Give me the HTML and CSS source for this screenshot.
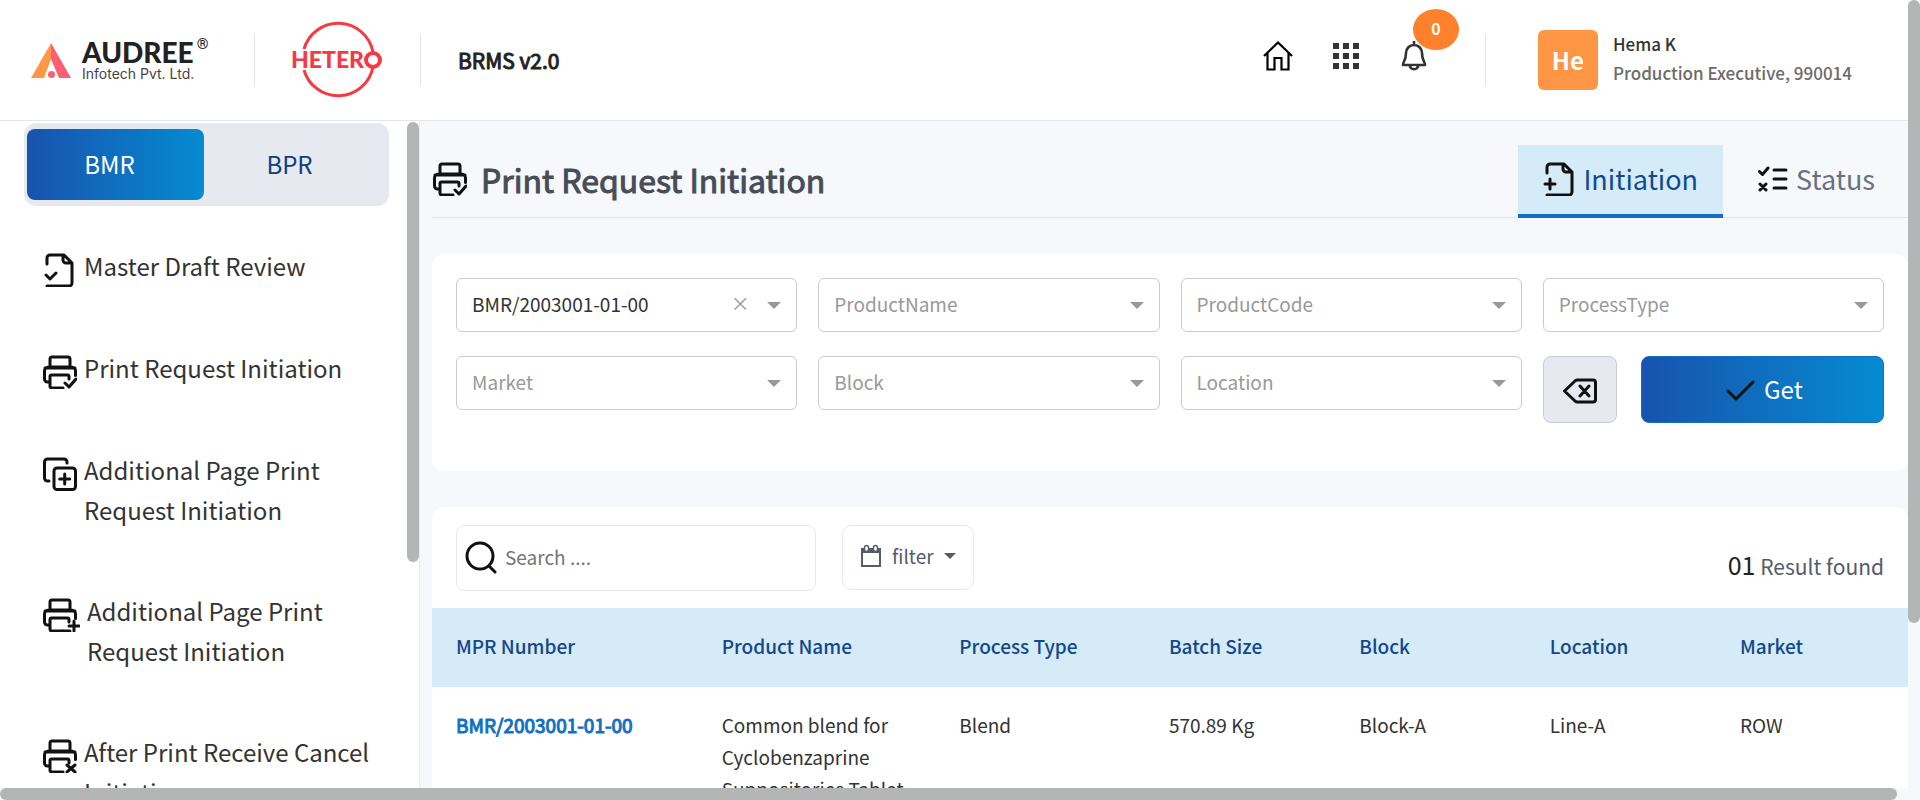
FILE: index.html
```
<!DOCTYPE html>
<html lang="en">
<head>
<meta charset="utf-8">
<title>BRMS v2.0 - Print Request Initiation</title>
<link rel="stylesheet" href="styles.css">
</head>
<body>
<svg class="sprite" aria-hidden="true">
  <symbol id="i-printer" viewBox="0 0 34 34">
    <path d="M7 12V4a2 2 0 0 1 2-2h16a2 2 0 0 1 2 2v8M2 13h30M7 27H4.500a3 3 0 0 1-3-3v-8a4 4 0 0 1 4-4h23a4 4 0 0 1 4 4v4.500M26 24v-2.500a1.500 1.500 0 0 0-1.500-1.500h-16a1.500 1.500 0 0 0-1.500 1.500V31a2 2 0 0 0 2 2h11"/>
  </symbol>
  <symbol id="i-file" viewBox="0 0 34 34">
    <path d="M4 11V5a3 3 0 0 1 3-3h14l8 8v20a3 3 0 0 1-3 3H4M20 2v5a3 3 0 0 0 3 3h6"/>
  </symbol>
</svg>
<div class="frame">
  <div class="page">
    <header class="topbar">
      <div class="audree">
        <svg class="audree-mark" viewBox="0 0 40 35" aria-hidden="true">
          <path fill="#ff9846" d="M20 0 0 35h13l7-19z"/>
          <path fill="#fd5f72" d="M20 0l20 35H28l-8-19z"/>
          <circle cx="20.500" cy="31.500" r="3.500" fill="#fd5f72"/>
        </svg>
        <div class="audree-words">
          <span class="audree-name">AUDREE<span class="reg">®</span></span>
          <span class="audree-sub">Infotech Pvt. Ltd.</span>
        </div>
      </div>
      <span class="rule"></span>
      <svg class="hetero" viewBox="0 0 92 78" role="img" aria-label="Hetero">
        <g fill="none" stroke="#f53a43">
          <path stroke-width="3" d="M13 28a35.500 35.500 0 0 1 69 3M82 46a35.500 35.500 0 0 1-69 3"/>
          <circle cx="82" cy="39" r="7" stroke-width="4"/>
        </g>
        <text class="hetero-text" x="0" y="47">HETER</text>
      </svg>
      <span class="rule"></span>
      <span class="app-name">BRMS v2.0</span>
      <nav class="top-actions" aria-label="Shortcuts">
        <a href="#home" class="top-icon" aria-label="Home">
          <svg viewBox="0 0 30 30"><path d="M1 15 15 1.500 29 15M4.500 12v16.500h7V17h7v11.500h7V12" fill="none" stroke="#000" stroke-width="2.200"/></svg>
        </a>
        <button type="button" class="top-icon" aria-label="Apps">
          <svg viewBox="0 0 30 30"><path fill="#333" d="M2 2h6v6H2zM12 2h6v6h-6zM22 2h6v6h-6zM2 12h6v6H2zM12 12h6v6h-6zM22 12h6v6h-6zM2 22h6v6H2zM12 22h6v6h-6zM22 22h6v6h-6z"/></svg>
        </button>
        <button type="button" class="top-icon bell" aria-label="Notifications">
          <svg viewBox="0 0 30 30"><path d="M15 0v4M15 4c-5 0-8 4-8 8 0 8-3 8-3 12h22c0-4-3-4-3-12 0-4-3-8-8-8z" fill="none" stroke="#333" stroke-width="2.600" stroke-linejoin="round"/><path d="M9.500 24.500a5.500 5 0 0 0 11 0z" fill="#333"/><path d="M12.500 25a2.500 2 0 0 0 5 0z" fill="#fff"/></svg>
          <span class="badge">0</span>
        </button>
      </nav>
      <span class="rule"></span>
      <div class="user">
        <span class="avatar">He</span>
        <div class="user-text">
          <div class="user-name">Hema K</div>
          <div class="user-role">Production Executive, 990014</div>
        </div>
      </div>
    </header>

    <div class="body">
      <aside class="sidebar">
        <div class="side-scroll">
          <div class="switch">
            <button type="button" class="active">BMR</button>
            <button type="button">BPR</button>
          </div>
          <nav class="menu" aria-label="Main">
            <a href="#mdr"><svg class="icon" viewBox="0 0 34 34"><use href="#i-file"/><path d="m3 22 4 4 6-6"/></svg><span>Master Draft Review</span></a>
            <a href="#pri"><svg class="icon" viewBox="0 0 34 34"><use href="#i-printer"/><path d="m22 28 4 4 7-8"/></svg><span>Print Request Initiation</span></a>
            <a href="#appri"><svg class="icon" viewBox="0 0 34 34"><path d="M6 24H4.500a3 3 0 0 1-3-3V5a3 3 0 0 1 3-3H21a3 3 0 0 1 3 3v1"/><rect x="11" y="11" width="21.500" height="21.500" rx="3"/><path d="M21.700 17v10M16.700 22h10"/></svg><span>Additional Page Print Request Initiation</span></a>
            <a href="#appri2" class="wide"><svg class="icon" viewBox="0 0 37 34"><use href="#i-printer" width="34" height="34"/><path d="M20 33h7M31 23v10M26 28h10"/></svg><span>Additional Page Print Request Initiation</span></a>
            <a href="#aprc"><svg class="icon" viewBox="0 0 34 34"><use href="#i-printer"/><path d="m24 26 8 7M32 26l-8 7"/></svg><span>After Print Receive Cancel Initiation</span></a>
          </nav>
        </div>
        <div class="track-y"><div class="thumb"></div></div>
      </aside>

      <main class="content">
        <div class="title-row">
          <h1><svg class="icon" viewBox="0 0 34 34"><use href="#i-printer"/><path d="m22 28 4 4 7-8"/></svg>Print Request Initiation</h1>
          <nav class="tabs" aria-label="View">
            <a href="#initiation" class="tab current"><svg class="icon" viewBox="0 0 34 34"><use href="#i-file"/><path d="M7 17v10M2 22h10"/></svg>Initiation</a>
            <a href="#status" class="tab"><svg class="icon" viewBox="0 0 34 34"><path d="m3.500 9.500 3 3 5.500-6.500M4 22l6 6M10 22l-6 6M18 8h12M18 17h12M18 26h12"/></svg>Status</a>
          </nav>
        </div>

        <form class="card filters">
          <div class="field filled">
            <select aria-label="MPR Number"><option>BMR/2003001-01-00</option></select>
            <button type="button" class="clear" aria-label="Clear MPR Number">×</button>
          </div>
          <div class="field"><select aria-label="ProductName"><option>ProductName</option></select></div>
          <div class="field"><select aria-label="ProductCode"><option>ProductCode</option></select></div>
          <div class="field"><select aria-label="ProcessType"><option>ProcessType</option></select></div>
          <div class="field"><select aria-label="Market"><option>Market</option></select></div>
          <div class="field"><select aria-label="Block"><option>Block</option></select></div>
          <div class="field"><select aria-label="Location"><option>Location</option></select></div>
          <div class="actions">
            <button type="reset" class="btn-clear" aria-label="Clear filters"><svg class="icon" viewBox="0 0 34 34"><path d="M1.500 18 12 8a3 3 0 0 1 2-1h16a2.500 2.500 0 0 1 2.500 2.500v17A2.500 2.500 0 0 1 30 29H14a3 3 0 0 1-2-1zM17 13l9 10M26 13l-9 10"/></svg></button>
            <button type="button" class="btn-get"><svg class="icon" viewBox="0 0 34 34"><path d="m6 19 8 8L31 10"/></svg>Get</button>
          </div>
        </form>

        <section class="card results">
          <div class="toolbar">
            <label class="search"><svg class="icon" viewBox="0 0 34 34"><circle cx="15" cy="16" r="13"/><path d="m24 26 6 6"/></svg><input type="search" placeholder="Search ...." aria-label="Search"></label>
            <button type="button" class="filter"><svg viewBox="0 0 22 24"><path d="M2 5h18v17H2z" fill="none" stroke="#555b69" stroke-width="2"/><path d="M1 4h20v5H1z" fill="#555b69"/><rect x="4.500" y="1.500" width="4" height="6" rx="2" fill="#fff" stroke="#555b69" stroke-width="1.500"/><rect x="13.500" y="1.500" width="4" height="6" rx="2" fill="#fff" stroke="#555b69" stroke-width="1.500"/></svg>filter<span class="caret"></span></button>
            <p class="count"><span>01</span> Result found</p>
          </div>
          <table>
            <colgroup><col class="c-mpr"><col class="c-name"><col class="c-type"><col class="c-std"><col class="c-std"><col class="c-std"><col class="c-last"></colgroup>
            <thead><tr><th scope="col">MPR Number</th><th scope="col">Product Name</th><th scope="col">Process Type</th><th scope="col">Batch Size</th><th scope="col">Block</th><th scope="col">Location</th><th scope="col">Market</th></tr></thead>
            <tbody><tr><td><a href="#BMR">BMR/2003001-01-00</a></td><td>Common blend for Cyclobenzaprine Suppositories Tablet</td><td>Blend</td><td>570.89 Kg</td><td>Block-A</td><td>Line-A</td><td>ROW</td></tr></tbody>
          </table>
        </section>
      </main>
    </div>
  </div>
  <div class="track-y"><div class="thumb page-thumb"></div></div>
  <div class="track-x"><div class="thumb-x"></div></div>
</div>
</body>
</html>
```
FILE: styles.css
```
* { box-sizing: border-box; }

body {
  margin: 0;
  background: #fff;
  color: #333;
  font-family: "Noto Sans CJK JP", "Noto Sans", sans-serif;
  font-size: 19px;
  line-height: 32px;
}

button, select, input { font: inherit; color: inherit; }
button { cursor: pointer; }
a { color: inherit; text-decoration: none; }

.sprite { position: absolute; width: 0; height: 0; }

.icon {
  flex: none;
  width: 34px;
  height: 34px;
  fill: none;
  stroke: #111;
  stroke-width: 3;
  stroke-linecap: round;
  stroke-linejoin: round;
}

.frame {
  display: grid;
  grid-template-columns: minmax(0, 1fr) 12px;
  grid-template-rows: minmax(0, 1fr) 12px;
  height: 100vh;
  overflow: hidden;
  background: #f6f8fb;
}
.page { display: flex; flex-direction: column; min-height: 0; overflow: hidden; }

.track-y { width: 12px; }
.thumb { height: 66%; border-radius: 6px; background: #b4b6b5; }
.page-thumb { height: 79%; }
.track-x { height: 12px; }
.thumb-x { width: 99.400%; height: 12px; border-radius: 6px; background: #b4b6b5; }

/* top bar */
.topbar {
  flex: none;
  display: flex;
  align-items: center;
  height: 121px;
  padding: 0 56px 0 31px;
  background: #fff;
  border-bottom: 1px solid #e4e6ea;
}
.rule { flex: none; width: 1px; height: 52px; background: #e3e5e9; }
.audree { display: flex; align-items: center; gap: 11px; width: 223px; }
.audree-mark { width: 40px; height: 35px; }
.audree-words { display: flex; flex-direction: column; gap: 4px; padding-top: 4px; }
.audree-name { display: flex; gap: 3px; font-family: Lato, sans-serif; font-weight: 900; font-size: 28px; line-height: 20px; color: #222; }
.reg { font-family: Roboto, sans-serif; font-weight: 500; font-size: 15px; line-height: 4px; }
.audree-sub { font-family: Inter, sans-serif; font-size: 14px; line-height: 16px; color: #444; }
.hetero { width: 92px; height: 78px; margin: 0 37px 0 36px; }
.hetero-text { font-family: Lato, sans-serif; font-weight: 900; font-size: 23px; fill: #f53a43; }
.app-name { margin-left: 37px; font-size: 21px; color: #222; -webkit-text-stroke: 1px; }
.top-actions { display: flex; gap: 38px; margin-left: auto; margin-right: 56px; padding-bottom: 8px; }
.top-icon { position: relative; width: 30px; height: 30px; padding: 0; border: 0; background: none; }
.top-icon svg { display: block; width: 30px; height: 30px; }
.badge {
  position: absolute;
  left: 14px;
  top: -32px;
  width: 46px;
  height: 41px;
  border-radius: 50%;
  background: #ff812b;
  color: #fff;
  font-size: 16px;
  font-weight: 700;
  line-height: 38px;
  text-align: center;
}
.user { display: flex; align-items: center; gap: 15px; margin-left: 52px; font-size: 17px; line-height: 29px; font-weight: 500; }
.user-text { padding-bottom: 4px; }
.avatar { width: 60px; height: 60px; border-radius: 6px; background: #ff9645; color: #fff; font-size: 24px; font-weight: 700; line-height: 60px; text-align: center; }
.user-name { color: #333; }
.user-role { color: #6b6b6b; }

.body { flex: 1; display: flex; min-height: 0; }

/* sidebar */
.sidebar { flex: none; display: flex; width: 420px; padding-top: 1px; background: #fff; border-right: 1px solid #e9ebf2; overflow: hidden; }
.side-scroll { flex: 1; min-width: 0; padding: 1px 18px 0 24px; overflow: hidden; }
.switch { display: flex; gap: 3px; padding: 6px 5px 6px 3px; border-radius: 12px; background: #e6e9ef; }
.switch button { flex: 1; height: 71px; padding: 0 12px 2px 0; border: 0; border-radius: 8px; background: none; color: #0f3f81; font-size: 24px; }
.switch .active { background: linear-gradient(90deg, #1853ae, #058bd1); color: #fff; }
.menu { display: flex; flex-direction: column; gap: 61px; padding: 40px 0 0 19px; font-size: 24px; line-height: 40px; }
.menu a { display: flex; gap: 7px; }
.menu .icon { margin-top: 7px; }
.menu .wide .icon { width: 37px; }

/* content */
.content { flex: 1; min-width: 0; padding: 24px 0 0 12px; overflow: hidden; }
.title-row { display: flex; justify-content: space-between; height: 73px; border-bottom: 1px solid #e3e5e9; }
h1 { display: flex; align-items: center; gap: 14px; margin: 0; padding: 0 0 4px 1px; font-size: 32px; line-height: 40px; font-weight: 400; color: #484c57; -webkit-text-stroke: 1px; }
.tabs { display: flex; }
.tab { display: flex; align-items: center; gap: 6px; height: 73px; padding: 0 33px 2px; color: #69707e; font-size: 27px; border-bottom: 4px solid transparent; }
.current { padding: 0 25px 2px; background: #d6ebf8; color: #0d4b90; border-color: #1170c4; }

.card { background: #fff; border-radius: 12px; }
.filters { display: grid; grid-template-columns: repeat(4, 1fr); gap: 24px 21px; align-items: start; margin-top: 36px; padding: 24px 24px 61px; }
.field { position: relative; height: 54px; }
.field select { width: 100%; height: 54px; padding: 0 15px 2px; border: 1px solid #ccc; border-radius: 6px; background: #fff; appearance: none; color: #999; font-size: 19px; }
.field.filled select { color: #333; }
.field::after { content: ""; position: absolute; right: 16px; top: 24px; border: 7px solid transparent; border-top-color: #999; border-bottom: 0; }
.clear { position: absolute; right: 46px; top: 11px; width: 22px; height: 28px; padding: 0; border: 0; background: none; color: #999; font-size: 19px; line-height: 28px; }
.actions { display: flex; gap: 24px; height: 54px; }
.btn-clear, .btn-get { display: flex; align-items: center; justify-content: center; height: 67px; border-radius: 8px; }
.btn-clear { width: 74px; padding: 0; border: 1px solid #c8cbd0; background: #e6e9ef; }
.btn-get { flex: 1; gap: 8px; padding: 0 0 2px; border: 1px solid #1170c4; background: linear-gradient(90deg, #1853ae, #058bd1); color: #fff; font-size: 24px; }

.results { margin-top: 36px; }
.toolbar { display: flex; align-items: flex-start; padding: 18px 24px 17px; }
.search { display: flex; align-items: center; gap: 6px; width: 360px; height: 66px; padding: 0 8px 2px; border: 1px solid #e6e8ec; border-radius: 8px; }
.search input { flex: 1; min-width: 0; border: 0; outline: 0; padding: 0; background: none; }
.search input::placeholder { color: #757575; opacity: 1; }
.filter { display: flex; align-items: center; gap: 10px; height: 65px; margin-left: 26px; padding: 0 17px 3px; border: 1px solid #e6e8ec; border-radius: 10px; background: #fff; color: #555b69; }
.filter svg { width: 22px; height: 24px; }
.caret { border: 6px solid transparent; border-top-color: #555b69; border-bottom: 0; }
.count { margin: 23px 0 0 auto; font-size: 21px; color: #555b69; }
.count span { font-size: 25px; color: #222; }

table { width: 100%; table-layout: fixed; border-collapse: collapse; }
th, td { padding: 22px 0 25px 24px; text-align: left; vertical-align: top; }
th { background: #d6ebf8; color: #14468a; font-weight: 500; }
td a { color: #1170c4; -webkit-text-stroke: 1px; }
.c-mpr { width: 18%; }
.c-name { width: 16.100%; }
.c-type { width: 14.200%; }
.c-std { width: 12.900%; }
```
